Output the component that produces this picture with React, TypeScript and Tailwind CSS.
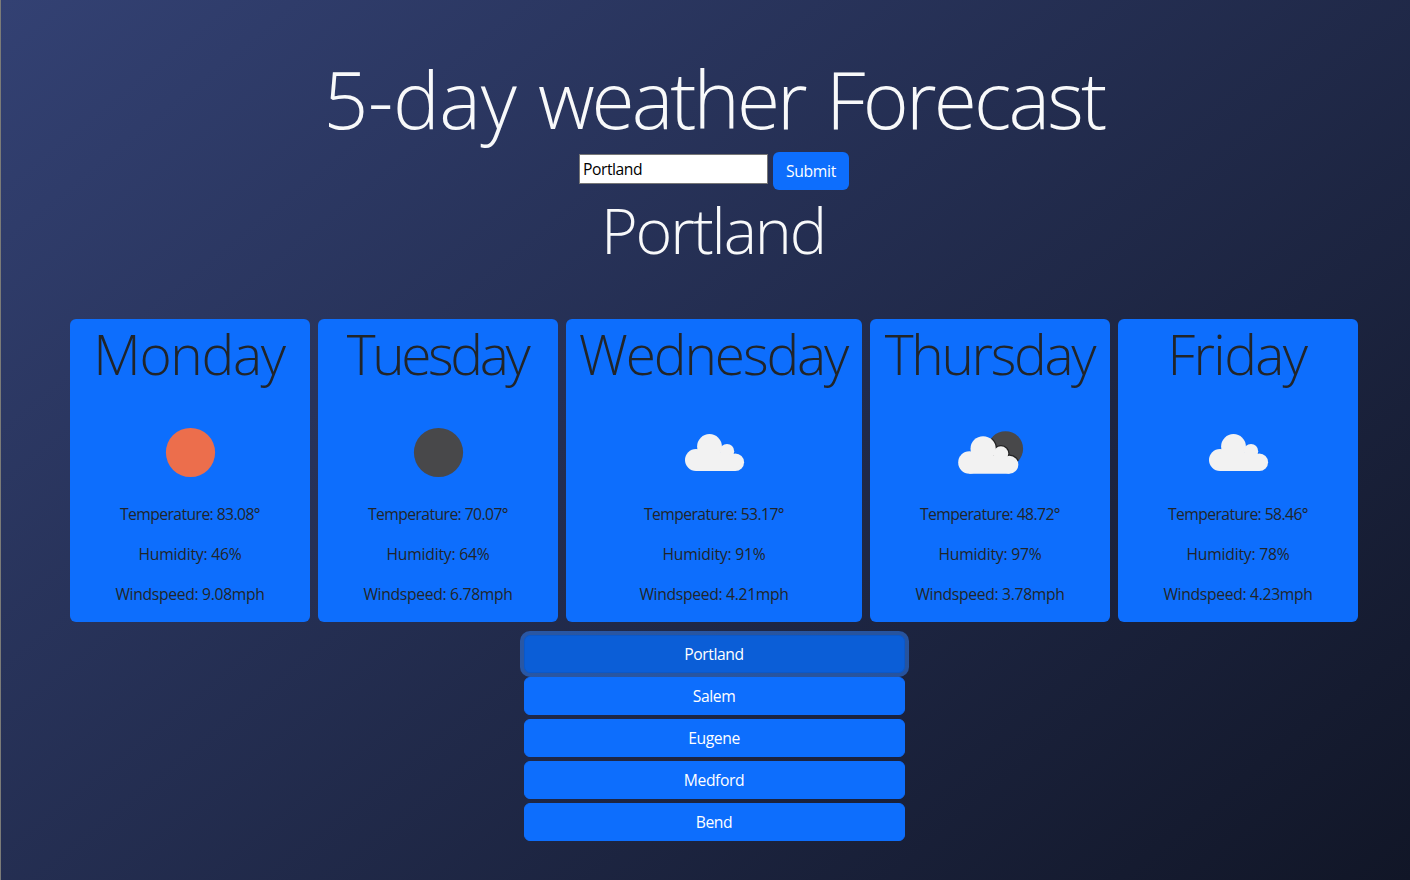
import { useState } from "react";

type Icon = "sun" | "night" | "cloud" | "cloudNight";

const days: { name: string; icon: Icon; temp: string; humidity: string; wind: string; width: string; tracking: string }[] = [
  { name: "Monday", icon: "sun", temp: "83.08", humidity: "46", wind: "9.08", width: "w-60", tracking: "tracking-[-1.3px] pr-[2px]" },
  { name: "Tuesday", icon: "night", temp: "70.07", humidity: "64", wind: "6.78", width: "w-60", tracking: "tracking-[-3.4px] pr-[2px]" },
  { name: "Wednesday", icon: "cloud", temp: "53.17", humidity: "91", wind: "4.21", width: "w-[296px]", tracking: "tracking-[-2.1px] pr-[2px]" },
  { name: "Thursday", icon: "cloudNight", temp: "48.72", humidity: "97", wind: "3.78", width: "w-60", tracking: "tracking-[-2.3px] pr-px" },
  { name: "Friday", icon: "cloud", temp: "58.46", humidity: "78", wind: "4.23", width: "w-60", tracking: "tracking-[-1.6px] pr-[2px]" },
];

const cities = ["Portland", "Salem", "Eugene", "Medford", "Bend"];

function CloudShape() {
  return (
    <>
      <circle cx="32" cy="57" r="11" />
      <circle cx="45.5" cy="43.5" r="12.4" />
      <circle cx="63" cy="48.2" r="7.2" />
      <circle cx="71.3" cy="59.2" r="8.8" />
      <path d="M32 50H63L71.3 54V68H32Z" />
    </>
  );
}

function WeatherIcon({ icon }: { icon: Icon }) {
  return (
    <svg viewBox="0 0 100 100" className="size-[100px] shrink-0">
      {icon === "sun" && <circle cx="50.5" cy="49.5" r="24.6" fill="#ec6e4c" />}
      {icon === "night" && <circle cx="50.5" cy="49.5" r="24.6" fill="#48484a" />}
      {icon === "cloud" && (
        <g fill="#f2f2f2">
          <CloudShape />
        </g>
      )}
      {icon === "cloudNight" && (
        <>
          <clipPath id="moon">
            <circle cx="65.5" cy="45.8" r="17.6" />
          </clipPath>
          <g clipPath="url(#moon)">
            <rect width="100" height="100" fill="#48484a" />
            <g fill="#222223" stroke="#222223" strokeWidth="2.6" transform="translate(-3.2 1.5) scale(1.018)">
              <CloudShape />
            </g>
          </g>
          <g fill="#f2f2f2" transform="translate(-3.2 1.5) scale(1.018)">
            <CloudShape />
          </g>
        </>
      )}
    </svg>
  );
}

export default function App() {
  const [query, setQuery] = useState("Portland");
  return (
    <div className="h-[880px] w-[1410px] overflow-hidden border-l border-[#7b7b78] bg-[linear-gradient(141deg,#334173,#111627)] pl-[17px] font-['Open_Sans',sans-serif] text-[15.7px] leading-6 text-[#212529]">
      <main className="flex flex-col items-center">
        <h1 className="mt-[51px] h-[101px] whitespace-nowrap text-[78.5px] leading-[96px] font-light tracking-[-1.9px] [word-spacing:3px] text-[#f8f9fa]">
          <span className="tracking-[-0.3px]">5-day</span> <span className="tracking-[-3px]">weather</span>{" "}
          <span className="tracking-[-2.8px]">Forecast</span>
        </h1>
        <form className="flex h-[38px] gap-[5px]" onSubmit={(e) => e.preventDefault()}>
          <input
            className="mt-0.5 h-[30px] w-[189px] border border-[#767676] bg-white px-[3px] tracking-[-0.45px] text-black outline-none"
            value={query}
            onChange={(e) => setQuery(e.target.value)}
          />
          <button className="h-[38px] w-19 rounded-md bg-[#0d6efd] tracking-[-0.3px] text-white">Submit</button>
        </form>
        <h2 className="mt-[1px] h-[128px] pr-[2px] whitespace-nowrap text-[62.8px] leading-[77px] font-light tracking-[-2.1px] text-[#f8f9fa]">Portland</h2>
        <section className="flex gap-2">
          {days.map((d) => (
            <article key={d.name} className={`${d.width} flex h-[303px] flex-col items-center rounded-md bg-[#0d6efd]`}>
              <h3 className={`${d.tracking} mt-px h-[83px] whitespace-nowrap text-[55px] leading-[67px] font-light`}>{d.name}</h3>
              <WeatherIcon icon={d.icon} />
              <div className="-mt-px flex flex-col items-center gap-4">
                <p className="tracking-[-0.58px]">Temperature: {d.temp}°</p>
                <p className="tracking-[-0.22px]">Humidity: {d.humidity}%</p>
                <p className="tracking-[-0.32px]">Windspeed: {d.wind}mph</p>
              </div>
            </article>
          ))}
        </section>
        <nav className="mt-[13px] flex w-[381px] flex-col gap-1 tracking-[-0.4px] text-white">
          {cities.map((c, i) => (
            <button
              key={c}
              className={
                i === 0
                  ? "h-[38px] rounded-md border border-[#0a58ca] bg-[#0b5ed7] shadow-[0_0_0_4px_rgba(49,132,253,0.5)]"
                  : "relative h-[38px] rounded-md border border-[#0d6efd] bg-[#0d6efd]"
              }
            >
              {c}
            </button>
          ))}
        </nav>
      </main>
    </div>
  );
}
